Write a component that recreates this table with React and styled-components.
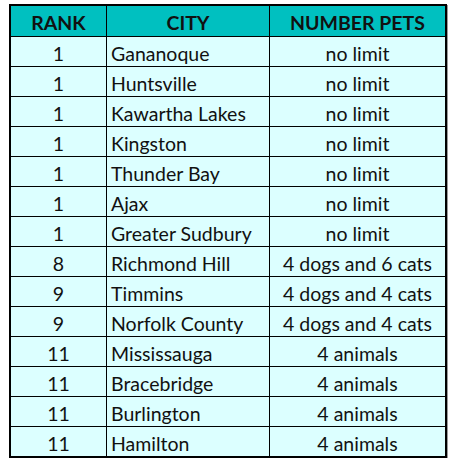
import React from 'react';
import styled, {createGlobalStyle} from 'styled-components';

const GlobalStyle = createGlobalStyle`
  body {
    margin: 0;
    background: #fff;
    font-family: Lato, "Open Sans", sans-serif;
    color: #111;
  }
`

const Wrapper = styled.div`
  padding: 4px 0 0 9px;
`

const Table = styled.table`
  border-collapse: collapse;
  border: 2px solid #000;
  box-shadow: 1px 1px 0 #9a9a9a;
  font-size: 19.5px;
  line-height: 23px;
  table-layout: fixed;
  width: 434px;
`

const HeadCell = styled.th`
  background: #00c0c0;
  border: 1px solid #000;
  height: 27px;
  padding: 3px 0 0;
  font-weight: 700;
  text-align: center;
  width: ${p => p.$w}px;
`

const Cell = styled.td`
  background: #dcffff;
  border: 1px solid #000;
  height: 26px;
  padding: 3px ${p => (p.$left ? '4px' : '0')} 0;
  text-align: ${p => (p.$left ? 'left' : 'center')};
  white-space: nowrap;
`

const rows = [
  ['1', 'Gananoque', 'no limit'],
  ['1', 'Huntsville', 'no limit'],
  ['1', 'Kawartha Lakes', 'no limit'],
  ['1', 'Kingston', 'no limit'],
  ['1', 'Thunder Bay', 'no limit'],
  ['1', 'Ajax', 'no limit'],
  ['1', 'Greater Sudbury', 'no limit'],
  ['8', 'Richmond Hill', '4 dogs and 6 cats'],
  ['9', 'Timmins', '4 dogs and 4 cats'],
  ['9', 'Norfolk County', '4 dogs and 4 cats'],
  ['11', 'Mississauga', '4 animals'],
  ['11', 'Bracebridge', '4 animals'],
  ['11', 'Burlington', '4 animals'],
  ['11', 'Hamilton', '4 animals'],
]

const App = () => {
  return (
    <Wrapper>
      <GlobalStyle />
      <Table>
        <thead>
          <tr>
            <HeadCell $w={95}>RANK</HeadCell>
            <HeadCell $w={162}>CITY</HeadCell>
            <HeadCell $w={175}>NUMBER PETS</HeadCell>
          </tr>
        </thead>
        <tbody>
          {rows.map(([rank, city, pets]) => (
            <tr key={city}>
              <Cell>{rank}</Cell>
              <Cell $left>{city}</Cell>
              <Cell>{pets}</Cell>
            </tr>
          ))}
        </tbody>
      </Table>
    </Wrapper>
  );
};

export default App;
